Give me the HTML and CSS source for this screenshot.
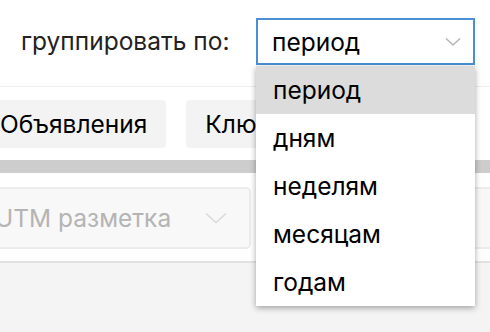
FILE: index.html
```html
<!DOCTYPE html>
<html lang="ru">
<head>
    <meta charset="UTF-8">
    <meta name="viewport" content="width=device-width, initial-scale=1.0">
    <title>Группировка</title>
    <link rel="stylesheet" href="styles.css">
</head>
<body>
    <header class="toolbar">
        <span class="toolbar-label">группировать по:</span>
        <div class="picker">
            <div class="picker-value">
                <span>период</span>
                <svg class="chevron" width="16" height="10" viewBox="0 0 16 10"><path d="M1 1.5 L8 8 L15 1.5" fill="none" stroke="#b8b8b8" stroke-width="1.6"/></svg>
            </div>
            <ul class="picker-options">
                <li class="selected">период</li>
                <li>дням</li>
                <li>неделям</li>
                <li>месяцам</li>
                <li>годам</li>
            </ul>
        </div>
    </header>
    <nav class="tabs">
        <button class="tab">Объявления</button>
        <button class="tab">Ключевые фразы</button>
    </nav>
    <div class="scrollbar"></div>
    <div class="filters">
        <div class="filter">
            <span>UTM разметка</span>
            <svg class="chevron" width="22" height="12" viewBox="0 0 22 12"><path d="M1 1.5 L11 10.5 L21 1.5" fill="none" stroke="#dadada" stroke-width="1.6"/></svg>
        </div>
        <div class="filter">
            <span>Начало периода</span>
        </div>
    </div>
    <main class="content"></main>
</body>
</html>
```

FILE: styles.css
```css
* {
  padding: 0;
  margin: 0;
  box-sizing: border-box;
}
html {
  font-family: Inter, Roboto, 'Noto Sans', sans-serif;
  font-size: 24.5px;
  color: #111;
  background-color: #fff;
}
body {
  min-height: 100vh;
  overflow: hidden;
  display: flex;
  flex-direction: column;
}
.toolbar {
  height: 87px;
  padding: 18px 0 0 21px;
  display: flex;
  align-items: flex-start;
  border-bottom: 1px solid #eeeeee;
}
.toolbar-label {
  width: 235px;
  line-height: 47px;
  color: #222;
  white-space: nowrap;
}
.picker {
  position: relative;
  width: 219px;
}
.picker-value {
  height: 47px;
  padding: 0 12px 0 14px;
  border: 2px solid #4a8fd3;
  display: flex;
  align-items: center;
  justify-content: space-between;
  color: #000;
}
.picker-options {
  /* open list lies over the tabs below */
  position: absolute;
  top: 48px;
  left: 0;
  width: 219px;
  list-style: none;
  background-color: #fff;
  box-shadow: 0 2px 6px rgba(0, 0, 0, 0.35);
  z-index: 2;
}
.picker-options li {
  height: 48px;
  line-height: 48px;
  padding-left: 17px;
  color: #000;
}
.picker-options li.selected {
  background-color: #dcdcdc;
}
.tabs {
  margin: 13px 0 0 -19px;
  display: flex;
  gap: 20px;
  white-space: nowrap;
}
.tab {
  font-family: inherit;
  font-size: inherit;
  height: 48px;
  padding: 0 19px;
  border: none;
  border-radius: 4px;
  background-color: #f3f3f3;
  color: #000;
}
.scrollbar {
  height: 13px;
  margin-top: 12px;
  background-color: #cdcdcd;
}
.filters {
  padding: 14px 0 12px;
  margin-left: -25px;
  display: flex;
  gap: 220px;
  white-space: nowrap;
  border-bottom: 2px solid #e2e2e2;
}
.filter {
  flex: none;
  width: 276px;
  height: 62px;
  padding: 0 22px 0 18px;
  border: 2px solid #ececec;
  border-radius: 5px;
  background-color: #f8f8f8;
  color: #b4b4b4;
  display: flex;
  align-items: center;
  justify-content: space-between;
}
.content {
  flex: 1;
  background-color: #f4f4f4;
}
```
